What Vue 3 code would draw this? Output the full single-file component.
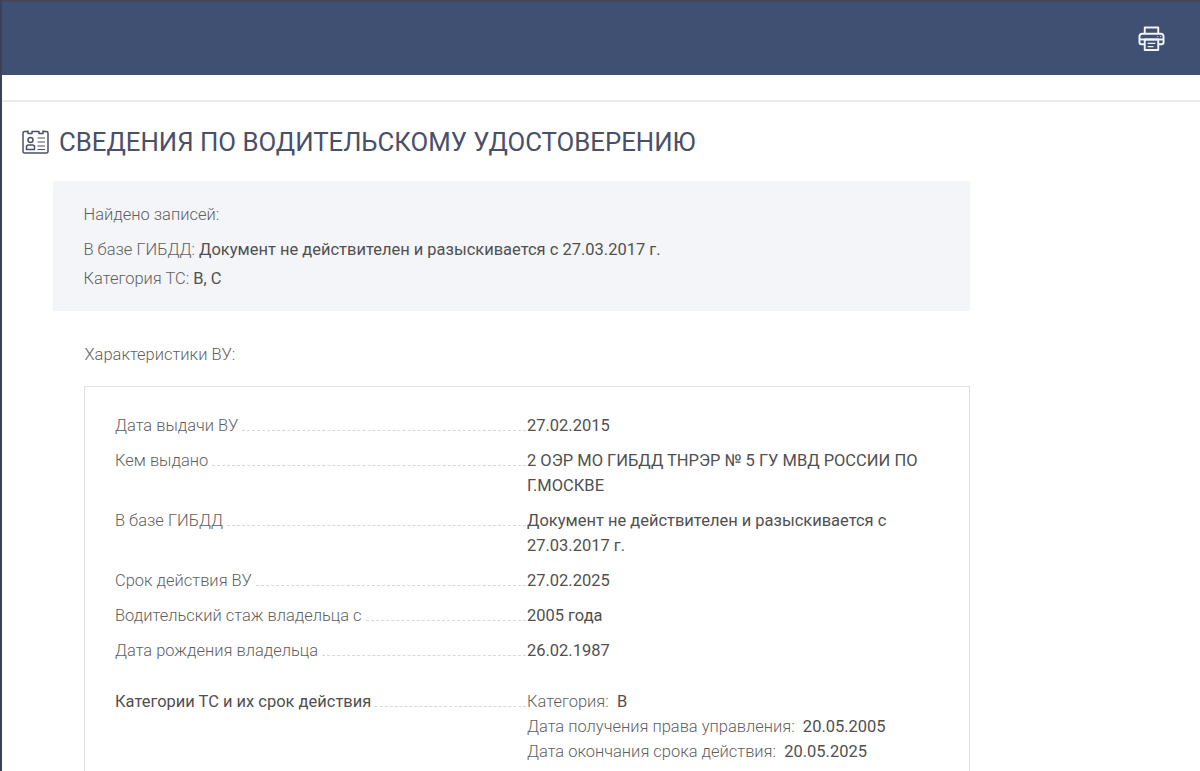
<script setup>
const rows = [
  { label: 'Дата выдачи ВУ', lines: ['27.02.2015'] },
  { label: 'Кем выдано', lines: ['2 ОЭР МО ГИБДД ТНРЭР № 5 ГУ МВД РОССИИ ПО Г.МОСКВЕ'] },
  { label: 'В базе ГИБДД', lines: ['Документ не действителен и разыскивается с 27.03.2017 г.'] },
  { label: 'Срок действия ВУ', lines: ['27.02.2025'] },
  { label: 'Водительский стаж владельца с', lines: ['2005 года'] },
  { label: 'Дата рождения владельца', lines: ['26.02.1987'] },
]
</script>

<template>
  <div class="page">
    <header class="top">
      <svg class="printer" width="27" height="27" viewBox="0 0 28 28" fill="none" stroke="#f2f4f8" stroke-width="2" stroke-linejoin="round">
        <path d="M7 9V2.500H21V9" />
        <path d="M7 20H3.500Q1.500 20 1.500 18V12Q1.500 9 4.500 9H23.500Q26.500 9 26.500 12V18Q26.500 20 24.500 20H21" />
        <path d="M1.500 15H26.500" />
        <rect x="7" y="15" width="14" height="11" />
        <path d="M10 19H18M10 22.500H16" stroke-width="1.300" />
        <path d="M20 12H21M23 12H24" stroke-width="1" />
      </svg>
    </header>
    <div class="band"></div>
    <main class="content">
      <h1 class="title">
        <svg width="27" height="24" viewBox="0 0 27 24" fill="none" stroke="#4a5068" stroke-width="1.500" stroke-linejoin="round">
          <path d="M6 1.500H2.500Q1 1.500 1 3V21.500Q1 23 2.500 23H24.500Q26 23 26 21.500V3Q26 1.500 24.500 1.500H21" />
          <path d="M6 .5V3.500H10V1.500H17V3.500H21V.5" />
          <circle cx="8.500" cy="10" r="2.500" />
          <path d="M4.500 19.500V17Q4.500 15 6.500 15H10.500Q12.500 15 12.500 17V19.500Z" />
          <path d="M15.500 8H23M15.500 12H23M15.500 16H23M15.500 19.500H23" stroke-width="1.200" />
        </svg>
        <span>СВЕДЕНИЯ ПО ВОДИТЕЛЬСКОМУ УДОСТОВЕРЕНИЮ</span>
      </h1>

      <section class="summary">
        <p class="found">Найдено записей:</p>
        <p class="line">В базе ГИБДД: <b>Документ не действителен и разыскивается с 27.03.2017 г.</b></p>
        <p class="line">Категория ТС: <b>B, C</b></p>
      </section>

      <p class="caption">Характеристики ВУ:</p>

      <section class="card">
        <div v-for="row in rows" :key="row.label" class="row">
          <div class="label"><span>{{ row.label }}</span><i class="dots"></i></div>
          <div class="value">{{ row.lines[0] }}</div>
        </div>
        <div class="row cats">
          <div class="label strong"><span>Категории ТС и их срок действия</span><i class="dots"></i></div>
          <div class="value">
            <div class="sub"><em>Категория:</em>&nbsp; B</div>
            <div class="sub"><em>Дата получения права управления:</em>&nbsp; 20.05.2005</div>
            <div class="sub"><em>Дата окончания срока действия:</em>&nbsp; 20.05.2025</div>
          </div>
        </div>
      </section>
    </main>
  </div>
</template>

<style>
html, body { margin: 0; background: #fff; overflow: hidden; }
</style>

<style scoped>
.page {
  height: 771px;
  overflow: hidden;
  box-sizing: border-box;
  border-left: 2px solid #3a4256;
  font-family: Roboto, sans-serif;
  font-size: 16.48px;
  font-weight: 300;
  color: #5f5f5f;
}
.top {
  height: 73px;
  margin-left: -2px;
  background: #3f5072;
  border-top: 2px solid #45465a;
  display: flex;
  justify-content: flex-end;
  align-items: center;
  padding-right: 35px;
}
.band {
  height: 25px;
  border-bottom: 2px solid #ebebeb;
}
.content { padding: 0 0 0 20px; }
.title {
  margin: 0;
  height: 79px;
  display: flex;
  align-items: center;
  gap: 10px;
  font-size: 25.75px;
  font-weight: 400;
  color: #4a5068;
}
.summary {
  margin-left: 31px;
  width: 917px;
  height: 130px;
  box-sizing: border-box;
  padding: 24px 30px 0 31px;
  background: #f3f5f9;
}
.summary p { margin: 0 0 0 -0.5px; line-height: 19px; }
.summary .found { margin-bottom: 16px; }
.summary .line { margin-bottom: 10px; }
b { font-weight: 400; color: #505050; }
.caption {
  margin: 34px 0 22px 62.5px;
  line-height: 19px;
}
.card {
  margin-left: 62px;
  width: 886px;
  box-sizing: border-box;
  border: 1px solid #e0e0e0;
  padding: 26px 30px 30px;
}
.row {
  display: flex;
  margin-bottom: 10px;
  line-height: 25px;
}
.label {
  flex: 0 0 412px;
  display: flex;
  align-self: flex-start;
  align-items: flex-end;
}
.dots {
  flex: 1;
  margin: 0 1px 7px 4px;
  border-bottom: 1px dashed #d8d8d8;
}
.value { flex: 1; font-weight: 400; color: #505050; }
.cats { margin-top: 26px; }
.label.strong { font-weight: 400; color: #505050; }
.sub em { font-style: normal; font-weight: 300; color: #5f5f5f; }
</style>
